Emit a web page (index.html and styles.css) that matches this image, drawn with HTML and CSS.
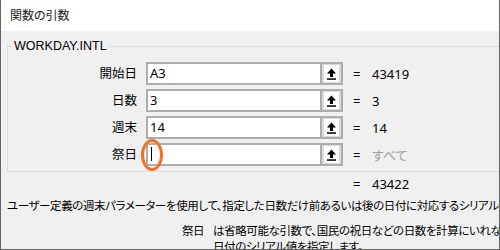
FILE: index.html
```html
<!DOCTYPE html>
<html lang="ja">
<head>
<meta charset="utf-8">
<title>関数の引数</title>
<link rel="stylesheet" href="styles.css">
</head>
<body>
<div class="dialog">
  <div class="titlebar">関数の引数</div>
  <div class="content">
    <fieldset class="group">
      <legend class="legend">WORKDAY.INTL</legend>
      <div class="rows">
        <div class="label">開始日</div>
        <div class="field"><div class="input">A3</div><div class="btn"><span class="btn-inner"><svg width="11" height="12" viewBox="0 0 11 12"><path d="M5.5 0.5 L1 5.5 H4 V9 H7 V5.5 H10 Z" fill="#000"/><rect x="1" y="10.3" width="9" height="1.5" fill="#000"/></svg></span></div></div>
        <div class="eq">=</div>
        <div class="val">43419</div>

        <div class="label">日数</div>
        <div class="field"><div class="input">3</div><div class="btn"><span class="btn-inner"><svg width="11" height="12" viewBox="0 0 11 12"><path d="M5.5 0.5 L1 5.5 H4 V9 H7 V5.5 H10 Z" fill="#000"/><rect x="1" y="10.3" width="9" height="1.5" fill="#000"/></svg></span></div></div>
        <div class="eq">=</div>
        <div class="val">3</div>

        <div class="label">週末</div>
        <div class="field"><div class="input">14</div><div class="btn"><span class="btn-inner"><svg width="11" height="12" viewBox="0 0 11 12"><path d="M5.5 0.5 L1 5.5 H4 V9 H7 V5.5 H10 Z" fill="#000"/><rect x="1" y="10.3" width="9" height="1.5" fill="#000"/></svg></span></div></div>
        <div class="eq">=</div>
        <div class="val">14</div>

        <div class="label">祭日</div>
        <div class="field"><div class="input focus"><span class="caret"></span><span class="mark"></span></div><div class="btn"><span class="btn-inner"><svg width="11" height="12" viewBox="0 0 11 12"><path d="M5.5 0.5 L1 5.5 H4 V9 H7 V5.5 H10 Z" fill="#000"/><rect x="1" y="10.3" width="9" height="1.5" fill="#000"/></svg></span></div></div>
        <div class="eq">=</div>
        <div class="val muted">すべて</div>
      </div>
    </fieldset>
    <div class="result"><span class="eq">=</span><span class="val">43422</span></div>
    <div class="desc">ユーザー定義の週末パラメーターを使用して、指定した日数だけ前あるいは後の日付に対応するシリアル値を返します。</div>
    <div class="argdesc">
      <div class="argname">祭日</div>
      <div class="argtext">は省略可能な引数で、国民の祝日などの日数を計算にいれない場合に指定します。<br>日付のシリアル値を指定します。</div>
    </div>
  </div>
</div>
</body>
</html>
```

FILE: styles.css
```css
* { box-sizing: border-box; }
html, body { margin: 0; padding: 0; }
body {
  width: 500px;
  height: 250px;
  overflow: hidden;
  font-family: "Noto Sans", "Noto Sans CJK JP", sans-serif;
  font-feature-settings: "palt";
  color: #000;
}
.dialog {
  width: 500px;
  height: 250px;
  border-left: 1px solid #646464;
  border-right: 1px solid #646464;
  border-bottom: 1px solid #646464;
  background: #f0f0f0;
  overflow: hidden;
  display: flex;
  flex-direction: column;
}
.titlebar {
  height: 31px;
  flex: none;
  background: #fff;
  font-size: 12px;
  line-height: 31px;
  padding-left: 9px;
  color: #1a1a1a;
}
.content {
  flex: 1;
  min-height: 0;
  overflow: hidden;
}
.group {
  margin: 7px 0 0 6px;
  width: 560px;
  border: 1px solid #dcdcdc;
  border-right: none;
  padding: 8px 0 5px 0;
  min-width: 0;
}
.legend {
  margin-left: 4px;
  padding: 0 2px;
  font-family: "Liberation Sans", sans-serif;
  font-size: 12.5px;
  line-height: 16px;
  color: #000;
}
.rows {
  display: grid;
  grid-template-columns: 129px 206px 29px 120px;
  grid-auto-rows: 23px;
  row-gap: 4px;
  align-items: center;
}
.label {
  text-align: right;
  font-size: 12.5px;
  line-height: 16px;
}
.field {
  margin-left: 9px;
  width: 197px;
  height: 23px;
  display: flex;
  border: 2px solid #adadad;
  background: #fff;
}
.input {
  flex: 1;
  position: relative;
  padding-left: 2px;
  font-size: 13px;
  line-height: 19px;
  border-right: 2px solid #adadad;
}
.btn {
  width: 19px;
  flex: none;
  background: #dadada;
  padding: 1px 2px;
  display: flex;
}
.btn-inner {
  flex: 1;
  background: #fff;
  display: flex;
  align-items: center;
  justify-content: center;
}
.btn-inner svg { display: block; }
.eq {
  padding-left: 10px;
  font-size: 13px;
  line-height: 16px;
}
.val {
  font-size: 13px;
  line-height: 16px;
}
.muted { color: #a0a0a0; }
.caret {
  position: absolute;
  left: 3px;
  top: 2px;
  width: 1px;
  height: 14px;
  background: #000;
}
.mark {
  position: absolute;
  left: -7px;
  top: -6px;
  width: 22px;
  height: 32px;
  border: 3px solid #f07323;
  border-radius: 50%;
}
.result {
  margin-top: 4px;
  padding-left: 342px;
  display: flex;
  font-size: 13px;
  line-height: 16px;
}
.result .eq { width: 29px; }
.desc {
  margin-top: 6px;
  padding-left: 6px;
  font-size: 11.5px;
  letter-spacing: -0.4px;
  line-height: 16px;
  white-space: nowrap;
}
.argdesc {
  margin-top: 9px;
  display: flex;
  padding-left: 181px;
  font-size: 11.5px;
  letter-spacing: -0.4px;
  line-height: 16px;
  white-space: nowrap;
}
.argname { width: 31px; flex: none; }
```
